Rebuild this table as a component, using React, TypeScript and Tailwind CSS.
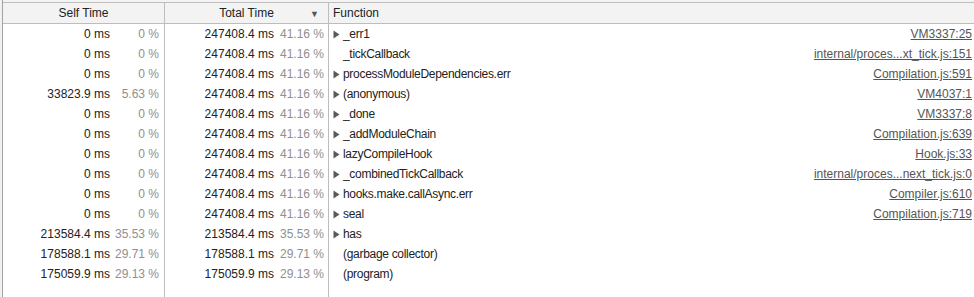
type Row = {
  self: string;
  selfPct: string;
  total: string;
  totalPct: string;
  name: string;
  arrow: boolean;
  url?: string;
};

const rows: Row[] = [
  { self: "0 ms", selfPct: "0 %", total: "247408.4 ms", totalPct: "41.16 %", name: "_err1", arrow: true, url: "VM3337:25" },
  { self: "0 ms", selfPct: "0 %", total: "247408.4 ms", totalPct: "41.16 %", name: "_tickCallback", arrow: false, url: "internal/proces...xt_tick.js:151" },
  { self: "0 ms", selfPct: "0 %", total: "247408.4 ms", totalPct: "41.16 %", name: "processModuleDependencies.err", arrow: true, url: "Compilation.js:591" },
  { self: "33823.9 ms", selfPct: "5.63 %", total: "247408.4 ms", totalPct: "41.16 %", name: "(anonymous)", arrow: true, url: "VM4037:1" },
  { self: "0 ms", selfPct: "0 %", total: "247408.4 ms", totalPct: "41.16 %", name: "_done", arrow: true, url: "VM3337:8" },
  { self: "0 ms", selfPct: "0 %", total: "247408.4 ms", totalPct: "41.16 %", name: "_addModuleChain", arrow: true, url: "Compilation.js:639" },
  { self: "0 ms", selfPct: "0 %", total: "247408.4 ms", totalPct: "41.16 %", name: "lazyCompileHook", arrow: true, url: "Hook.js:33" },
  { self: "0 ms", selfPct: "0 %", total: "247408.4 ms", totalPct: "41.16 %", name: "_combinedTickCallback", arrow: true, url: "internal/proces...next_tick.js:0" },
  { self: "0 ms", selfPct: "0 %", total: "247408.4 ms", totalPct: "41.16 %", name: "hooks.make.callAsync.err", arrow: true, url: "Compiler.js:610" },
  { self: "0 ms", selfPct: "0 %", total: "247408.4 ms", totalPct: "41.16 %", name: "seal", arrow: true, url: "Compilation.js:719" },
  { self: "213584.4 ms", selfPct: "35.53 %", total: "213584.4 ms", totalPct: "35.53 %", name: "has", arrow: true },
  { self: "178588.1 ms", selfPct: "29.71 %", total: "178588.1 ms", totalPct: "29.71 %", name: "(garbage collector)", arrow: false },
  { self: "175059.9 ms", selfPct: "29.13 %", total: "175059.9 ms", totalPct: "29.13 %", name: "(program)", arrow: false },
];

const Arrow = () => (
  <svg width="7" height="9" viewBox="0 0 7 9" className="shrink-0">
    <path d="M0.5 0.5 L6.5 4.5 L0.5 8.5 Z" fill="#5a5a5a" />
  </svg>
);

const App = () => {
  return (
    <div
      className="w-[974px] h-[297px] bg-white text-[12px] text-[#222] overflow-hidden flex"
      style={{ fontFamily: '"Liberation Sans", Arial, sans-serif' }}
    >
      <div className="w-[3px] bg-[#f1f1f1] border-r border-[#a3a3a3] shrink-0" />
      <div className="flex-1 flex flex-col">
        <div className="h-[2px] bg-[#f3f3f3]" />
        <div className="h-[22px] flex bg-[#f3f3f3] border-y border-[#bdbdbd]">
          <div className="w-[162px] border-r border-[#bdbdbd] flex items-center justify-center">Self Time</div>
          <div className="w-[164px] border-r border-[#bdbdbd] flex items-center relative">
            <span className="flex-1 text-center">Total Time</span>
            <span className="absolute right-[9px] top-[5px] text-[9px] text-[#555]">▼</span>
          </div>
          <div className="flex-1 flex items-center pl-[4px]">Function</div>
        </div>
        <div className="flex-1 flex">
          <div className="w-[162px] border-r border-[#bdbdbd] flex flex-col">
            {rows.map((r, i) => (
              <div key={i} className="h-[20px] flex items-center justify-end pr-[5px] whitespace-nowrap">
                <span>{r.self}</span>
                <span className="w-[49px] text-right text-[#8f8f8f]">{r.selfPct}</span>
              </div>
            ))}
          </div>
          <div className="w-[164px] border-r border-[#bdbdbd] flex flex-col">
            {rows.map((r, i) => (
              <div key={i} className="h-[20px] flex items-center justify-end pr-[4px] whitespace-nowrap">
                <span>{r.total}</span>
                <span className="w-[50px] text-right text-[#8f8f8f]">{r.totalPct}</span>
              </div>
            ))}
          </div>
          <div className="flex-1 flex flex-col">
            {rows.map((r, i) => (
              <div key={i} className="h-[20px] flex items-center pl-[4px] pr-[2px] whitespace-nowrap">
                <span className="w-[10px] flex items-center">{r.arrow && <Arrow />}</span>
                <span className="flex-1 tracking-[-0.3px]">{r.name}</span>
                {r.url && <span className="text-[#555] underline">{r.url}</span>}
              </div>
            ))}
          </div>
        </div>
      </div>
    </div>
  );
};

export default App;
